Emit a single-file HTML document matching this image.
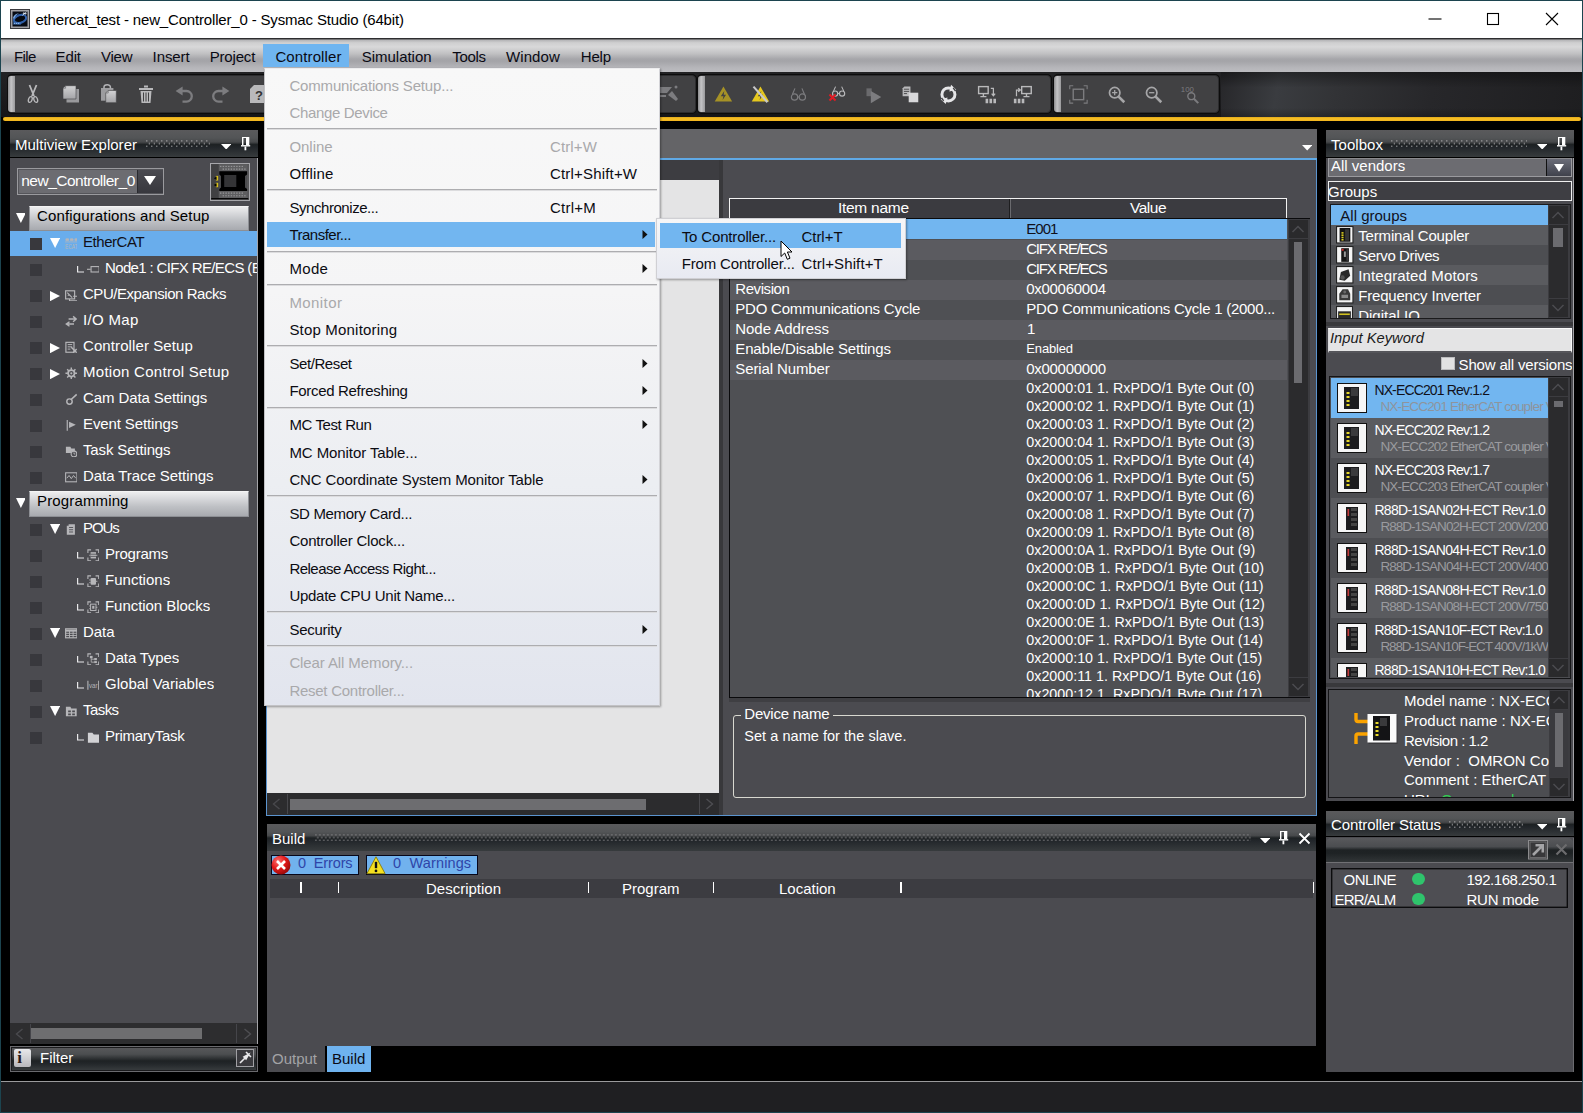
<!DOCTYPE html>
<html><head><meta charset="utf-8"><title>Sysmac Studio</title>
<style>
html,body{margin:0;padding:0;background:#000;}
body{width:1583px;height:1113px;overflow:hidden;font-family:"Liberation Sans",Arial,sans-serif;font-size:15px;color:#fff;}
#app{position:relative;width:1583px;height:1113px;overflow:hidden;background:#000;}
#app div,#app svg{position:absolute;box-sizing:border-box;}
.t{white-space:nowrap;line-height:20px;height:20px;}
.hdr{background:linear-gradient(#5a5a5c 0%,#535557 28%,#47494b 43%,#1d2123 52%,#22262a 62%,#373b3d 96%,#000 96.5%,#000 100%);}
.grip{background-image:radial-gradient(circle,#9c9c9e 0.55px,transparent 0.95px),radial-gradient(circle,#8e8e90 0.55px,transparent 0.95px);background-size:5px 5.8px,5px 5.8px;background-position:-1.7px -2.2px,0.8px 0.7px;}
.sel{background:#6fb3ef;}

.grip2{background-image:radial-gradient(circle,#78787a 0.55px,transparent 0.95px),radial-gradient(circle,#6c6c6e 0.55px,transparent 0.95px);background-size:4px 5.8px,4px 5.8px;background-position:-1.2px -2.2px,0.8px 0.7px;}
.hdr2{background:linear-gradient(#5a5a5c 0%,#535557 28%,#47494b 43%,#1d2123 52%,#22262a 62%,#373b3d 100%);}

</style></head>
<body>
<div id="app">
<div style="left:0px;top:0px;width:1583px;height:1113px;background:#000;border:1px solid #1c444f;"></div>
<div style="left:1px;top:1px;width:1581px;height:37px;background:#fff;"></div>
<svg style="left:10px;top:9px;" width="20" height="20" viewBox="0 0 20 20"><rect x="0.5" y="0.5" width="19" height="19" fill="#a2a2a6" stroke="#3a3a3e"/><rect x="2.5" y="2.5" width="15" height="15" fill="#070b14"/><ellipse cx="10" cy="10" rx="6.3" ry="3.8" transform="rotate(-18 10 10)" fill="none" stroke="#2f5ea6" stroke-width="2.2"/><ellipse cx="10.6" cy="9.6" rx="4.6" ry="2.4" transform="rotate(-18 10.6 9.6)" fill="#05080f"/><path d="M3 9 C3.5 6.5 6 4.5 9 4.2 C6.5 5.5 4.6 7.4 4.2 10 Z" fill="#7fb0e8"/><path d="M3.2 13.2 H11 V15.6 H3.2 Z" fill="#3d6fb5" opacity="0.8"/><path d="M4 14.4 H10" stroke="#9cc4f0" stroke-width="0.9" stroke-dasharray="1.2 0.8"/><path d="M12.5 6.5 L16.5 2.8 M13.6 3.2 L15.8 5.6 M12.8 4.6 L16.6 4.4" stroke="#e8f0fa" stroke-width="0.8"/></svg>
<div class="t" style="left:35.4px;top:9.5px;color:#000;letter-spacing:-0.166px;">ethercat_test - new_Controller_0 - Sysmac Studio (64bit)</div>
<svg style="left:1425px;top:8px;" width="140" height="22" viewBox="0 0 140 22"><path d="M3.5 11 H16.5" stroke="#000" stroke-width="1.1"/><rect x="62.5" y="5.5" width="11" height="11" fill="none" stroke="#000" stroke-width="1.1"/><path d="M121 5 L133 17 M133 5 L121 17" stroke="#000" stroke-width="1.1"/></svg>
<div style="left:1px;top:38px;width:1581px;height:34px;background:linear-gradient(#2e2e30 0%,#2e2e30 2.5%,#b4b4b6 6%,#cfcfd0 14%,#d8d8d9 26%,#c2c2c4 45%,#a6a6aa 62%,#a4a4a8 68%,#b6b6ba 88%,#bcbcc0 100%);"></div>
<div style="left:263px;top:44px;width:86px;height:23px;background:#6fb5f0;"></div>
<div class="t" style="left:14px;top:46.7px;color:#0a0a14;letter-spacing:-0.618px;">File</div>
<div class="t" style="left:55.6px;top:46.7px;color:#0a0a14;letter-spacing:-0.137px;">Edit</div>
<div class="t" style="left:101px;top:46.7px;color:#0a0a14;letter-spacing:-0.236px;">View</div>
<div class="t" style="left:152.6px;top:46.7px;color:#0a0a14;letter-spacing:-0.102px;">Insert</div>
<div class="t" style="left:209.7px;top:46.7px;color:#0a0a14;letter-spacing:-0.169px;">Project</div>
<div class="t" style="left:275.4px;top:46.7px;color:#0a0a14;letter-spacing:0.117px;">Controller</div>
<div class="t" style="left:361.8px;top:46.7px;color:#0a0a14;letter-spacing:-0.033px;">Simulation</div>
<div class="t" style="left:452.3px;top:46.7px;color:#0a0a14;letter-spacing:-0.323px;">Tools</div>
<div class="t" style="left:505.9px;top:46.7px;color:#0a0a14;letter-spacing:0.125px;">Window</div>
<div class="t" style="left:580.7px;top:46.7px;color:#0a0a14;letter-spacing:-0.138px;">Help</div>
<div style="left:1px;top:72px;width:1581px;height:45px;background:linear-gradient(#222224 0%,#1c1c1e 50%,#161618 100%);"></div>
<div style="left:1221px;top:72px;width:361px;height:45px;background:linear-gradient(rgba(0,0,0,0.35) 0%,rgba(0,0,0,0) 35%,rgba(0,0,0,0) 80%,rgba(0,0,0,0.25) 100%),linear-gradient(100deg,#27272a 0%,#3a3c40 16%,#323336 32%,#27272a 58%,#1e1e20 100%);"></div>
<div style="left:8px;top:74.6px;width:688px;height:38.4px;background:#414143;border:1px solid #2c2c2e;border-radius:4px;box-shadow:0 0 0 1px #0c0c0c;"></div>
<div style="left:8px;top:75.6px;width:7px;height:36.4px;background:linear-gradient(90deg,#8c8c8e,#c4c4c6 45%,#9a9a9c);border-radius:3px 0 0 3px;"></div>
<div style="left:698px;top:74.6px;width:353px;height:38.4px;background:#414143;border:1px solid #2c2c2e;border-radius:4px;box-shadow:0 0 0 1px #0c0c0c;"></div>
<div style="left:698px;top:75.6px;width:7px;height:36.4px;background:linear-gradient(90deg,#8c8c8e,#c4c4c6 45%,#9a9a9c);border-radius:3px 0 0 3px;"></div>
<div style="left:1054px;top:74.6px;width:165px;height:38.4px;background:#414143;border:1px solid #2c2c2e;border-radius:4px;box-shadow:0 0 0 1px #0c0c0c;"></div>
<div style="left:1054px;top:75.6px;width:7px;height:36.4px;background:linear-gradient(90deg,#8c8c8e,#c4c4c6 45%,#9a9a9c);border-radius:3px 0 0 3px;"></div>
<svg style="left:21.0px;top:82.0px;" width="24.0" height="24.0" viewBox="0 0 24 24"><path d="M8.5 3 L13 14 M15.5 3 L11 14" stroke="#b9b9bb" stroke-width="1.8" fill="none"/><ellipse cx="9.3" cy="17.5" rx="1.8" ry="3" fill="none" stroke="#b9b9bb" stroke-width="1.3" transform="rotate(18 9.3 17.5)"/><ellipse cx="14.7" cy="17.5" rx="1.8" ry="3" fill="none" stroke="#b9b9bb" stroke-width="1.3" transform="rotate(-18 14.7 17.5)"/></svg>
<svg style="left:58.0px;top:82.0px;" width="24.0" height="24.0" viewBox="0 0 24 24"><defs><linearGradient id="pg" x1="0" y1="0" x2="0" y2="1"><stop offset="0" stop-color="#d2d2d4"/><stop offset="1" stop-color="#a4a4a7"/></linearGradient></defs><path d="M8.5 7 H21 V20.5 H8.5 Z" fill="#9a9a9d"/><path d="M5 6.2 L7.6 3.7 H18 V17 H5 Z" fill="url(#pg)" stroke="#414143" stroke-width="0.6"/><path d="M5 6.2 H7.6 V3.7" fill="none" stroke="#6a6a6d" stroke-width="0.7"/></svg>
<svg style="left:96.0px;top:82.0px;" width="24.0" height="24.0" viewBox="0 0 24 24"><path d="M5 6 H17.4 V18.7 H5 Z" fill="#9c9c9f"/><path d="M8 6.5 V5 A3.2 2.2 0 0 1 14.4 5 V6.5" fill="none" stroke="#b4b4b7" stroke-width="1.5"/><path d="M9.7 11 L12.2 8.5 H20.3 V20.7 H9.7 Z" fill="url(#pg)" stroke="#414143" stroke-width="0.6"/><path d="M9.7 11 H12.2 V8.5" fill="none" stroke="#6a6a6d" stroke-width="0.7"/></svg>
<svg style="left:134.0px;top:82.0px;" width="24.0" height="24.0" viewBox="0 0 24 24"><path d="M5 7 H19 M10 4.5 H14" stroke="#b9b9bb" stroke-width="1.8"/><path d="M6.5 9 H17.5 L16.5 21 H7.5 Z" fill="#b9b9bb"/><path d="M9.5 10.5 V19.5 M12 10.5 V19.5 M14.5 10.5 V19.5" stroke="#414143" stroke-width="1"/></svg>
<svg style="left:172.0px;top:82.0px;" width="24.0" height="24.0" viewBox="0 0 24 24"><path d="M9 9 H14.5 A5.3 5.3 0 0 1 14.5 19.6 H10.5" fill="none" stroke="#7c7c7f" stroke-width="2.3"/><path d="M3.6 9 L10.6 4.4 V13.6 Z" fill="#7c7c7f"/></svg>
<svg style="left:209.0px;top:82.0px;" width="24.0" height="24.0" viewBox="0 0 24 24"><path d="M15 9 H9.5 A5.3 5.3 0 0 0 9.5 19.6 H13.5" fill="none" stroke="#7c7c7f" stroke-width="2.3"/><path d="M20.4 9 L13.4 4.4 V13.6 Z" fill="#7c7c7f"/></svg>
<svg style="left:246.0px;top:82.0px;" width="24.0" height="24.0" viewBox="0 0 24 24"><path d="M4 7 L8 3 H20 V21 H4 Z" fill="#b9b9bb"/><text x="9" y="18" font-size="13" font-weight="bold" font-family="Liberation Sans" fill="#333">?</text></svg>
<svg style="left:656.0px;top:82.0px;" width="24.0" height="24.0" viewBox="0 0 24 24"><path d="M3 5 H16 L11 11 H3 Z" fill="#7c7c7f"/><path d="M12 13 L16 9 L22 17 L20 19 Z" fill="#7c7c7f"/><path d="M3 14 H10" stroke="#7c7c7f" stroke-width="2"/><circle cx="20" cy="5" r="1.5" fill="#7c7c7f"/></svg>
<svg style="left:712.56px;top:83.56px;" width="20.88" height="20.88" viewBox="0 0 24 24"><path d="M12 3 L22 20 H2 Z" fill="#a69226"/><path d="M13 8 L9 14 H12 L11 18.5 L15 12.5 H12.3 Z" fill="#414143"/></svg>
<svg style="left:749.56px;top:83.56px;" width="20.88" height="20.88" viewBox="0 0 24 24"><path d="M12 3 L22 20 H2 Z" fill="#e6c81e"/><path d="M13 8 L9 14 H12 L11 18.5 L15 12.5 H12.3 Z" fill="#414143"/><path d="M4 3 L20 21" stroke="#c8c8ca" stroke-width="2.4"/></svg>
<svg style="left:787.56px;top:83.56px;" width="20.88" height="20.88" viewBox="0 0 24 24"><circle cx="7.5" cy="15" r="3.6" fill="none" stroke="#7c7c7f" stroke-width="1.4"/><circle cx="16.5" cy="15" r="3.6" fill="none" stroke="#7c7c7f" stroke-width="1.4"/><path d="M5 12 L8 5 M19 12 L16 5 M11 15 H13" stroke="#7c7c7f" stroke-width="1.3" fill="none"/></svg>
<svg style="left:825.56px;top:83.56px;" width="20.88" height="20.88" viewBox="0 0 24 24"><circle cx="10.5" cy="11" r="3" fill="none" stroke="#b9b9bb" stroke-width="1.3"/><circle cx="18.5" cy="11" r="3" fill="none" stroke="#b9b9bb" stroke-width="1.3"/><path d="M8.5 8.5 L11 3 M20.5 8.5 L18 3 M13.5 11 H15.5" stroke="#b9b9bb" stroke-width="1.2" fill="none"/><path d="M4 12 L11 19 M11 12 L4 19" stroke="#e01b24" stroke-width="2.4"/></svg>
<svg style="left:862.56px;top:83.56px;" width="20.88" height="20.88" viewBox="0 0 24 24"><path d="M4 5 H10 V14 H4 Z" fill="#6a6a6d"/><path d="M9 8 L21 15 L9 22 Z" fill="#7c7c7f"/></svg>
<svg style="left:899.56px;top:83.56px;" width="20.88" height="20.88" viewBox="0 0 24 24"><path d="M3 5 L5 3 H12 V14 H3 Z" fill="#b9b9bb"/><path d="M4.5 6 H10.5 M4.5 8.5 H10.5 M4.5 11 H8" stroke="#414143" stroke-width="1"/><rect x="10" y="10" width="11" height="11" fill="#d8d8da"/></svg>
<svg style="left:937.56px;top:83.56px;" width="20.88" height="20.88" viewBox="0 0 24 24"><circle cx="12" cy="12" r="7.5" fill="none" stroke="#e6e6e8" stroke-width="3.4"/><path d="M15 1 L21 6.5 L13 8.5 Z" fill="#e6e6e8"/><path d="M9 23 L3 17.5 L11 15.5 Z" fill="#e6e6e8"/><path d="M17.5 4.5 L20 8 M6.5 19.5 L4 16" stroke="#414143" stroke-width="1.6"/></svg>
<svg style="left:975.56px;top:83.56px;" width="20.88" height="20.88" viewBox="0 0 24 24"><rect x="3" y="3" width="11" height="8" fill="none" stroke="#b9b9bb" stroke-width="1.6"/><path d="M8.5 11 V14 M5 14.5 H12" stroke="#b9b9bb" stroke-width="1.6"/><path d="M17 5 H20 V13 M18 11 L20 13.5 L22 11" stroke="#b9b9bb" stroke-width="1.4" fill="none"/><path d="M11 17 H14 V22 H11 Z M15.5 17 H18.5 V22 H15.5 Z M20 17 H23 V22 H20 Z" fill="#b9b9bb"/></svg>
<svg style="left:1012.56px;top:83.56px;" width="20.88" height="20.88" viewBox="0 0 24 24"><rect x="10" y="3" width="11" height="8" fill="none" stroke="#b9b9bb" stroke-width="1.6"/><path d="M15.5 11 V14 M12 14.5 H19" stroke="#b9b9bb" stroke-width="1.6"/><path d="M4 14 V7 H8 M6 5 L8.5 7 L6 9" stroke="#b9b9bb" stroke-width="1.4" fill="none"/><path d="M1 17 H4 V22 H1 Z M5.5 17 H8.5 V22 H5.5 Z M10 17 H13 V22 H10 Z" fill="#b9b9bb"/></svg>
<svg style="left:1067.56px;top:83.56px;" width="20.88" height="20.88" viewBox="0 0 24 24"><rect x="6" y="6" width="12" height="12" fill="none" stroke="#7c7c7f" stroke-width="1.6"/><path d="M2 6 V2 H6 M18 2 H22 V6 M22 18 V22 H18 M6 22 H2 V18" stroke="#7c7c7f" stroke-width="1.3" fill="none"/></svg>
<svg style="left:1105.56px;top:83.56px;" width="20.88" height="20.88" viewBox="0 0 24 24"><circle cx="10" cy="10" r="6" fill="none" stroke="#a6a6a8" stroke-width="2"/><path d="M14.5 14.5 L21 21" stroke="#a6a6a8" stroke-width="3"/><path d="M7 10 H13 M10 7 V13" stroke="#a6a6a8" stroke-width="1.5"/></svg>
<svg style="left:1142.56px;top:83.56px;" width="20.88" height="20.88" viewBox="0 0 24 24"><circle cx="10" cy="10" r="6" fill="none" stroke="#a6a6a8" stroke-width="2"/><path d="M14.5 14.5 L21 21" stroke="#a6a6a8" stroke-width="3"/><path d="M7 10 H13" stroke="#a6a6a8" stroke-width="1.5"/></svg>
<svg style="left:1179.56px;top:83.56px;" width="20.88" height="20.88" viewBox="0 0 24 24"><text x="1" y="9" font-size="9" font-family="Liberation Sans" fill="#7c7c7f">100</text><circle cx="13" cy="14" r="4" fill="none" stroke="#7c7c7f" stroke-width="1.6"/><path d="M16 17 L21 22" stroke="#7c7c7f" stroke-width="2.4"/></svg>
<div style="left:3px;top:117px;width:1578px;height:4px;background:linear-gradient(#e0a81c,#f8c024 45%,#f2b41e);border-radius:3px 3px 3px 3px;"></div>
<div style="left:10px;top:130px;width:248px;height:942px;background:#4b4b50;"></div>
<div class="hdr" style="left:10px;top:130px;width:248px;height:27.7px;"></div>
<div class="t" style="left:15px;top:134.8px;letter-spacing:0.017px;">Multiview Explorer</div>
<div class="grip" style="left:146px;top:140px;width:64px;height:7px;"></div>
<svg style="left:221px;top:143.8px;" width="10.4" height="5.5" viewBox="0 0 10.4 5.5"><path d="M0 0 H10.4 L5.2 5.5 Z" fill="#fff"/></svg>
<svg style="left:241px;top:137px;" width="10" height="14" viewBox="0 0 10 14"><path d="M1 0 H8.3 V8.3 H5 V1 H2.4 V8.3 H1 Z" fill="#fff"/><rect x="0" y="8.1" width="9.2" height="1.4" fill="#fff"/><rect x="3.5" y="9.5" width="1.8" height="3.8" fill="#fff"/></svg>
<div style="left:17px;top:168px;width:147px;height:27px;background:#6c6c71;border:1px solid #9a9a9e;box-shadow:inset 0 0 0 1px #55555a;"></div>
<div style="left:137px;top:170px;width:26px;height:23px;background:linear-gradient(#4a4a50,#38383e);border-left:1px solid #2a2a2e;"></div>
<div class="t" style="left:21.2px;top:170.5px;font-size:15.5px;letter-spacing:-0.493px;">new_Controller_0</div>
<svg style="left:144px;top:176px;" width="12" height="10" viewBox="0 0 12 10"><path d="M0 0 H12 L6 9 Z" fill="#fff"/></svg>
<svg style="left:210px;top:163px;" width="40" height="38" viewBox="0 0 40 38"><rect x="0.5" y="0.5" width="39" height="37" fill="#4c4c4e" stroke="#a6a6aa"/><rect x="1.2" y="1.2" width="7.6" height="34" fill="#404042"/><rect x="8.8" y="1.2" width="28.3" height="7" fill="#5e5e60"/><rect x="8.8" y="28" width="28.3" height="7" fill="#5e5e60"/><rect x="37.1" y="1.2" width="1.7" height="34" fill="#5a5a5c"/><rect x="10.0" y="2.9" width="1.4" height="1" fill="#9a9a9c"/><rect x="12.6" y="5.3" width="1.4" height="1.7" fill="#8a8a8c"/><rect x="12.7" y="2.9" width="1.4" height="1" fill="#9a9a9c"/><rect x="15.3" y="5.3" width="1.4" height="1.7" fill="#8a8a8c"/><rect x="15.4" y="2.9" width="1.4" height="1" fill="#9a9a9c"/><rect x="18.0" y="5.3" width="1.4" height="1.7" fill="#8a8a8c"/><rect x="18.1" y="2.9" width="1.4" height="1" fill="#9a9a9c"/><rect x="20.7" y="5.3" width="1.4" height="1.7" fill="#8a8a8c"/><rect x="20.8" y="2.9" width="1.4" height="1" fill="#9a9a9c"/><rect x="23.4" y="5.3" width="1.4" height="1.7" fill="#8a8a8c"/><rect x="23.5" y="2.9" width="1.4" height="1" fill="#9a9a9c"/><rect x="26.1" y="5.3" width="1.4" height="1.7" fill="#8a8a8c"/><rect x="26.2" y="2.9" width="1.4" height="1" fill="#9a9a9c"/><rect x="28.8" y="5.3" width="1.4" height="1.7" fill="#8a8a8c"/><rect x="28.9" y="2.9" width="1.4" height="1" fill="#9a9a9c"/><rect x="31.5" y="5.3" width="1.4" height="1.7" fill="#8a8a8c"/><rect x="31.6" y="2.9" width="1.4" height="1" fill="#9a9a9c"/><rect x="34.2" y="5.3" width="1.4" height="1.7" fill="#8a8a8c"/><rect x="10.0" y="29.3" width="1.4" height="1.7" fill="#8a8a8c"/><rect x="12.6" y="32.3" width="1.4" height="1" fill="#9a9a9c"/><rect x="12.7" y="29.3" width="1.4" height="1.7" fill="#8a8a8c"/><rect x="15.3" y="32.3" width="1.4" height="1" fill="#9a9a9c"/><rect x="15.4" y="29.3" width="1.4" height="1.7" fill="#8a8a8c"/><rect x="18.0" y="32.3" width="1.4" height="1" fill="#9a9a9c"/><rect x="18.1" y="29.3" width="1.4" height="1.7" fill="#8a8a8c"/><rect x="20.7" y="32.3" width="1.4" height="1" fill="#9a9a9c"/><rect x="20.8" y="29.3" width="1.4" height="1.7" fill="#8a8a8c"/><rect x="23.4" y="32.3" width="1.4" height="1" fill="#9a9a9c"/><rect x="23.5" y="29.3" width="1.4" height="1.7" fill="#8a8a8c"/><rect x="26.1" y="32.3" width="1.4" height="1" fill="#9a9a9c"/><rect x="26.2" y="29.3" width="1.4" height="1.7" fill="#8a8a8c"/><rect x="28.8" y="32.3" width="1.4" height="1" fill="#9a9a9c"/><rect x="28.9" y="29.3" width="1.4" height="1.7" fill="#8a8a8c"/><rect x="31.5" y="32.3" width="1.4" height="1" fill="#9a9a9c"/><rect x="31.6" y="29.3" width="1.4" height="1.7" fill="#8a8a8c"/><rect x="34.2" y="32.3" width="1.4" height="1" fill="#9a9a9c"/><path d="M9.3 8.2 H37.1 V11.5 L35 13 V24.5 L37.1 26 V28 H9.3 V26 L11 24.5 V13 L9.3 11.5 Z" fill="#000"/><rect x="14.2" y="12" width="12.1" height="12" fill="#343436"/><rect x="1.2" y="35" width="37" height="1.2" fill="#060606"/><rect x="5.9" y="12.9" width="2.3" height="4.7" fill="#d6be1e"/><rect x="5.9" y="19.8" width="2.3" height="4.4" fill="#d6be1e"/><path d="M3.8 15.2 L6.6 13.4 V17 Z M3.8 22 L6.6 20.2 V23.8 Z" fill="#050505"/></svg>
<div style="left:29px;top:205.5px;width:220px;height:25.5px;background:linear-gradient(#ededee 0%,#d6d7da 30%,#bfc1c5 60%,#a8aaaf 100%);border:1px solid #8d8f94;border-top-color:#f4f4f4;"></div>
<div class="t" style="left:37.1px;top:205.8px;color:#000;letter-spacing:0.134px;">Configurations and Setup</div>
<svg style="left:15.6px;top:212.8px;" width="9.8" height="10" viewBox="0 0 9.8 10"><path d="M0 0 H9.8 L4.9 10 Z" fill="#fff"/></svg>
<div style="left:29px;top:491px;width:220px;height:25.5px;background:linear-gradient(#ededee 0%,#d6d7da 30%,#bfc1c5 60%,#a8aaaf 100%);border:1px solid #8d8f94;border-top-color:#f4f4f4;"></div>
<div class="t" style="left:37.1px;top:491.3px;color:#000;letter-spacing:0.134px;">Programming</div>
<svg style="left:15.6px;top:498.3px;" width="9.8" height="10" viewBox="0 0 9.8 10"><path d="M0 0 H9.8 L4.9 10 Z" fill="#fff"/></svg>
<div style="left:10px;top:231px;width:247px;height:25px;background:#69adec;"></div>
<div style="left:30px;top:238px;width:12px;height:12px;background:#38383d;"></div>
<svg style="left:50.3px;top:238.3px;" width="10.2" height="10" viewBox="0 0 10.2 10"><path d="M0 0 H10.2 L5.1 10 Z" fill="#fff"/></svg>
<svg style="left:64.6px;top:236.8px;" width="12.6" height="12.6" viewBox="0 0 14 14"><path d="M1 2 H4 V4 H1 Z M6 2 H9 V4 H6 Z M11 2 H14 V4 H11 Z M0 5.5 H14" fill="#b6b6b9" stroke="#b6b6b9" stroke-width="0.8"/><text x="0" y="13.5" font-size="7" font-family="Liberation Sans" fill="#b6b6b9" textLength="14" lengthAdjust="spacingAndGlyphs">ECAT</text></svg>
<div class="t" style="left:83px;top:232px;color:#101018;letter-spacing:-0.455px;">EtherCAT</div>
<div style="left:30px;top:264px;width:12px;height:12px;background:#38383d;"></div>
<svg style="left:77px;top:266.3px;" width="7" height="7" viewBox="0 0 7 7"><path d="M0.6 0 V6 H7" stroke="#e8e8ea" stroke-width="1.2" fill="none"/></svg>
<svg style="left:86.6px;top:262.8px;" width="12.6" height="12.6" viewBox="0 0 14 14"><path d="M0 7 H4" stroke="#b6b6b9" stroke-width="1.2"/><rect x="4.5" y="4" width="9" height="6" fill="none" stroke="#b6b6b9" stroke-width="1.2"/></svg>
<div class="t" style="left:105px;top:258px;letter-spacing:-0.639px;max-width:152px;overflow:hidden;">Node1 : CIFX RE/ECS (E</div>
<div style="left:30px;top:290px;width:12px;height:12px;background:#38383d;"></div>
<svg style="left:50px;top:290.6px;" width="10" height="10.2" viewBox="0 0 10 10.2"><path d="M0 0 V10.2 L10 5.1 Z" fill="#fff"/></svg>
<svg style="left:64.6px;top:288.8px;" width="12.6" height="12.6" viewBox="0 0 14 14"><rect x="0.7" y="2" width="10" height="9" fill="none" stroke="#b6b6b9" stroke-width="1.3"/><path d="M2.5 4 L8 9.5 M3 7 H6" stroke="#b6b6b9" stroke-width="1.2"/><path d="M9 8 H14 V13 H5 V11" fill="none" stroke="#b6b6b9" stroke-width="1.2"/></svg>
<div class="t" style="left:83px;top:284px;letter-spacing:-0.459px;">CPU/Expansion Racks</div>
<div style="left:30px;top:316px;width:12px;height:12px;background:#38383d;"></div>
<svg style="left:64.6px;top:314.8px;" width="12.6" height="12.6" viewBox="0 0 14 14"><path d="M4 4.5 H12 M9 1.5 L12.5 4.5 L9 7.5" stroke="#b6b6b9" stroke-width="1.6" fill="none"/><path d="M10 10 H2 M5 7.5 L1.5 10 L5 12.5" stroke="#b6b6b9" stroke-width="1.6" fill="none"/></svg>
<div class="t" style="left:83px;top:310px;letter-spacing:0.322px;">I/O Map</div>
<div style="left:30px;top:342px;width:12px;height:12px;background:#38383d;"></div>
<svg style="left:50px;top:342.6px;" width="10" height="10.2" viewBox="0 0 10 10.2"><path d="M0 0 V10.2 L10 5.1 Z" fill="#fff"/></svg>
<svg style="left:64.6px;top:340.8px;" width="12.6" height="12.6" viewBox="0 0 14 14"><rect x="1" y="1.5" width="9" height="11" fill="none" stroke="#b6b6b9" stroke-width="1.3"/><path d="M3 4 H8 M3 6.5 H8 M3 9 H6" stroke="#b6b6b9" stroke-width="1.1"/><path d="M7 7 L13 13 M9 13 L13 9" stroke="#b6b6b9" stroke-width="1.6"/></svg>
<div class="t" style="left:83px;top:336px;letter-spacing:0.094px;">Controller Setup</div>
<div style="left:30px;top:368px;width:12px;height:12px;background:#38383d;"></div>
<svg style="left:50px;top:368.6px;" width="10" height="10.2" viewBox="0 0 10 10.2"><path d="M0 0 V10.2 L10 5.1 Z" fill="#fff"/></svg>
<svg style="left:64.6px;top:366.8px;" width="12.6" height="12.6" viewBox="0 0 14 14"><circle cx="7" cy="7" r="3.6" fill="none" stroke="#b6b6b9" stroke-width="2"/><circle cx="7" cy="7" r="1.2" fill="#b6b6b9"/><path d="M7 0.5 V3 M7 11 V13.5 M0.5 7 H3 M11 7 H13.5 M2.4 2.4 L4.1 4.1 M9.9 9.9 L11.6 11.6 M2.4 11.6 L4.1 9.9 M9.9 4.1 L11.6 2.4" stroke="#b6b6b9" stroke-width="1.6"/></svg>
<div class="t" style="left:83px;top:362px;letter-spacing:0.275px;">Motion Control Setup</div>
<div style="left:30px;top:394px;width:12px;height:12px;background:#38383d;"></div>
<svg style="left:64.6px;top:392.8px;" width="12.6" height="12.6" viewBox="0 0 14 14"><circle cx="5" cy="9.5" r="3" fill="none" stroke="#b6b6b9" stroke-width="1.6"/><path d="M6.5 7.5 L13 1.5" stroke="#b6b6b9" stroke-width="1.8"/></svg>
<div class="t" style="left:83px;top:388px;letter-spacing:-0.099px;">Cam Data Settings</div>
<div style="left:30px;top:420px;width:12px;height:12px;background:#38383d;"></div>
<svg style="left:64.6px;top:418.8px;" width="12.6" height="12.6" viewBox="0 0 14 14"><path d="M2.5 1 V13" stroke="#b6b6b9" stroke-width="1.3"/><path d="M4.5 3 L12 6.5 L4.5 10 Z" fill="#b6b6b9"/></svg>
<div class="t" style="left:83px;top:414px;letter-spacing:-0.109px;">Event Settings</div>
<div style="left:30px;top:446px;width:12px;height:12px;background:#38383d;"></div>
<svg style="left:64.6px;top:444.8px;" width="12.6" height="12.6" viewBox="0 0 14 14"><path d="M1 2 H6 L7 4 H11 V9 H1 Z" fill="#b6b6b9"/><circle cx="10" cy="10" r="3.2" fill="#4b4b50" stroke="#b6b6b9" stroke-width="1.2"/><path d="M10 8.3 V10 H11.5" stroke="#b6b6b9" stroke-width="1" fill="none"/></svg>
<div class="t" style="left:83px;top:440px;letter-spacing:-0.139px;">Task Settings</div>
<div style="left:30px;top:472px;width:12px;height:12px;background:#38383d;"></div>
<svg style="left:64.6px;top:470.8px;" width="12.6" height="12.6" viewBox="0 0 14 14"><rect x="0.7" y="2" width="12.6" height="10" fill="none" stroke="#b6b6b9" stroke-width="1.2"/><path d="M2 8 L4.5 5 L7 8.5 L9.5 5 L12 8" stroke="#b6b6b9" stroke-width="1.1" fill="none"/></svg>
<div class="t" style="left:83px;top:466px;letter-spacing:-0.070px;">Data Trace Settings</div>
<div style="left:30px;top:524px;width:12px;height:12px;background:#38383d;"></div>
<svg style="left:50.3px;top:524.3px;" width="10.2" height="10" viewBox="0 0 10.2 10"><path d="M0 0 H10.2 L5.1 10 Z" fill="#fff"/></svg>
<svg style="left:64.6px;top:522.8px;" width="12.6" height="12.6" viewBox="0 0 14 14"><path d="M2 3 H4 V1.5 H11 V13 H2 Z" fill="#b6b6b9"/><path d="M4.5 5 H9 M4.5 7.5 H9 M4.5 10 H9" stroke="#4b4b50" stroke-width="1"/></svg>
<div class="t" style="left:83px;top:518px;letter-spacing:-1.126px;">POUs</div>
<div style="left:30px;top:550px;width:12px;height:12px;background:#38383d;"></div>
<svg style="left:77px;top:552.3px;" width="7" height="7" viewBox="0 0 7 7"><path d="M0.6 0 V6 H7" stroke="#e8e8ea" stroke-width="1.2" fill="none"/></svg>
<svg style="left:86.6px;top:548.8px;" width="12.6" height="12.6" viewBox="0 0 14 14"><path d="M1 4.5 V1 H4.5 M9.5 1 H13 V4.5 M13 9.5 V13 H9.5 M4.5 13 H1 V9.5" stroke="#b6b6b9" stroke-width="1.2" fill="none"/><rect x="4" y="3.5" width="6" height="7" fill="#b6b6b9"/><path d="M4 5.8 H10 M4 8.2 H10" stroke="#4b4b50" stroke-width="0.9"/><path d="M2.5 7 H4 M10 7 H11.5" stroke="#b6b6b9" stroke-width="1"/></svg>
<div class="t" style="left:105px;top:544px;letter-spacing:-0.240px;max-width:152px;overflow:hidden;">Programs</div>
<div style="left:30px;top:576px;width:12px;height:12px;background:#38383d;"></div>
<svg style="left:77px;top:578.3px;" width="7" height="7" viewBox="0 0 7 7"><path d="M0.6 0 V6 H7" stroke="#e8e8ea" stroke-width="1.2" fill="none"/></svg>
<svg style="left:86.6px;top:574.8px;" width="12.6" height="12.6" viewBox="0 0 14 14"><path d="M1 4.5 V1 H4.5 M9.5 1 H13 V4.5 M13 9.5 V13 H9.5 M4.5 13 H1 V9.5" stroke="#b6b6b9" stroke-width="1.2" fill="none"/><rect x="4" y="3.2" width="6" height="7.6" rx="1" fill="#b6b6b9"/><path d="M2.5 5.5 H4 M2.5 8.5 H4 M10 7 H11.5" stroke="#b6b6b9" stroke-width="1"/></svg>
<div class="t" style="left:105px;top:570px;letter-spacing:0.019px;max-width:152px;overflow:hidden;">Functions</div>
<div style="left:30px;top:602px;width:12px;height:12px;background:#38383d;"></div>
<svg style="left:77px;top:604.3px;" width="7" height="7" viewBox="0 0 7 7"><path d="M0.6 0 V6 H7" stroke="#e8e8ea" stroke-width="1.2" fill="none"/></svg>
<svg style="left:86.6px;top:600.8px;" width="12.6" height="12.6" viewBox="0 0 14 14"><path d="M1 4.5 V1 H4.5 M9.5 1 H13 V4.5 M13 9.5 V13 H9.5 M4.5 13 H1 V9.5" stroke="#b6b6b9" stroke-width="1.2" fill="none"/><rect x="4" y="3.5" width="6" height="7" fill="none" stroke="#b6b6b9" stroke-width="1.1"/><rect x="5.8" y="5.4" width="2.4" height="3.2" fill="#b6b6b9"/><path d="M2.5 5.5 H4 M2.5 8.5 H4 M10 7 H11.5" stroke="#b6b6b9" stroke-width="1"/></svg>
<div class="t" style="left:105px;top:596px;letter-spacing:-0.052px;max-width:152px;overflow:hidden;">Function Blocks</div>
<div style="left:30px;top:628px;width:12px;height:12px;background:#38383d;"></div>
<svg style="left:50.3px;top:628.3px;" width="10.2" height="10" viewBox="0 0 10.2 10"><path d="M0 0 H10.2 L5.1 10 Z" fill="#fff"/></svg>
<svg style="left:64.6px;top:626.8px;" width="12.6" height="12.6" viewBox="0 0 14 14"><rect x="0.7" y="2" width="12.6" height="10" fill="none" stroke="#b6b6b9" stroke-width="1.3"/><path d="M0.7 4 H13.3" stroke="#b6b6b9" stroke-width="2.4"/><path d="M1 7 H13 M1 9.5 H13 M5 4 V12 M9 4 V12" stroke="#b6b6b9" stroke-width="1"/></svg>
<div class="t" style="left:83px;top:622px;letter-spacing:-0.071px;">Data</div>
<div style="left:30px;top:654px;width:12px;height:12px;background:#38383d;"></div>
<svg style="left:77px;top:656.3px;" width="7" height="7" viewBox="0 0 7 7"><path d="M0.6 0 V6 H7" stroke="#e8e8ea" stroke-width="1.2" fill="none"/></svg>
<svg style="left:86.6px;top:652.8px;" width="12.6" height="12.6" viewBox="0 0 14 14"><path d="M1 4.5 V1 H4.5 M9.5 1 H13 V4.5 M13 9.5 V13 H9.5 M4.5 13 H1 V9.5" stroke="#b6b6b9" stroke-width="1.2" fill="none"/><rect x="3.2" y="3.2" width="3" height="2.6" fill="#b6b6b9"/><rect x="8" y="5.6" width="3" height="2.4" fill="#b6b6b9"/><rect x="8" y="9" width="3" height="2.2" fill="#b6b6b9"/><path d="M4.7 5.8 V10.2 H8 M4.7 6.9 H8" stroke="#b6b6b9" stroke-width="0.9" fill="none"/></svg>
<div class="t" style="left:105px;top:648px;letter-spacing:-0.150px;max-width:152px;overflow:hidden;">Data Types</div>
<div style="left:30px;top:680px;width:12px;height:12px;background:#38383d;"></div>
<svg style="left:77px;top:682.3px;" width="7" height="7" viewBox="0 0 7 7"><path d="M0.6 0 V6 H7" stroke="#e8e8ea" stroke-width="1.2" fill="none"/></svg>
<svg style="left:86.6px;top:678.8px;" width="12.6" height="12.6" viewBox="0 0 14 14"><path d="M1 2 V12 M13 2 V12" stroke="#b6b6b9" stroke-width="1.2"/><text x="2.2" y="10" font-size="7" font-family="Liberation Sans" fill="#b6b6b9" textLength="9.6" lengthAdjust="spacingAndGlyphs">var</text></svg>
<div class="t" style="left:105px;top:674px;letter-spacing:0.016px;max-width:152px;overflow:hidden;">Global Variables</div>
<div style="left:30px;top:706px;width:12px;height:12px;background:#38383d;"></div>
<svg style="left:50.3px;top:706.3px;" width="10.2" height="10" viewBox="0 0 10.2 10"><path d="M0 0 H10.2 L5.1 10 Z" fill="#fff"/></svg>
<svg style="left:64.6px;top:704.8px;" width="12.6" height="12.6" viewBox="0 0 14 14"><path d="M1 2 H6 L7 4 H13 V12.5 H1 Z" fill="#b6b6b9"/><path d="M3.5 6 H6.5 V8 H3.5 Z M8 6 H11 V8 H8 Z M3.5 9.5 H6.5 V11.5 H3.5 Z M8 9.5 H11 V11.5 H8 Z" fill="#4b4b50"/></svg>
<div class="t" style="left:83px;top:700px;letter-spacing:-0.568px;">Tasks</div>
<div style="left:30px;top:732px;width:12px;height:12px;background:#38383d;"></div>
<svg style="left:77px;top:734.3px;" width="7" height="7" viewBox="0 0 7 7"><path d="M0.6 0 V6 H7" stroke="#e8e8ea" stroke-width="1.2" fill="none"/></svg>
<svg style="left:86.6px;top:730.8px;" width="12.6" height="12.6" viewBox="0 0 14 14"><path d="M1 2 H6 L7.5 4 H13.5 V13 H1 Z" fill="#d2d2d5"/></svg>
<div class="t" style="left:105px;top:726px;letter-spacing:-0.273px;max-width:152px;overflow:hidden;">PrimaryTask</div>
<div style="left:257px;top:158px;width:1px;height:865px;background:#a4a4a8;"></div>
<div style="left:10px;top:1022.7px;width:248px;height:21.3px;background:#2d2d2f;"></div>
<div style="left:30px;top:1024px;width:1px;height:19px;background:#45454a;"></div>
<div style="left:236px;top:1024px;width:1px;height:19px;background:#45454a;"></div>
<svg style="left:15px;top:1027.5px;" width="9" height="12" viewBox="0 0 9 12"><path d="M7.5 1 L1.5 6 L7.5 11" stroke="#4a4a4e" stroke-width="1.4" fill="none"/></svg>
<svg style="left:243px;top:1027.5px;" width="9" height="12" viewBox="0 0 9 12"><path d="M1.5 1 L7.5 6 L1.5 11" stroke="#4e4e52" stroke-width="1.4" fill="none"/></svg>
<div style="left:31px;top:1027.7px;width:170.6px;height:11.5px;background:#6e6e70;"></div>
<div style="left:257px;top:1022px;width:1px;height:24px;background:#a4a4a8;"></div>
<div style="left:10px;top:1044px;width:248px;height:2px;background:#000;"></div>
<div style="left:10px;top:1046px;width:248px;height:26px;background:linear-gradient(#58585b 0%,#4c4e50 30%,#1e2224 58%,#23272a 70%,#3a3e40 100%);border:1px solid #6a6a6e;box-shadow:inset 0 0 0 1px #1a1a1c;"></div>
<div style="left:14px;top:1049px;width:17px;height:18px;background:linear-gradient(#e8e8ea,#b8b8bc);border-radius:2px;"></div>
<div class="t" style="left:17.3px;top:1048px;font-size:17px;color:#2a1a1a;font-weight:bold;font-family:Liberation Serif,DejaVu Serif,serif;">i</div>
<div class="t" style="left:40px;top:1048px;">Filter</div>
<svg style="left:236px;top:1049px;" width="18" height="18" viewBox="0 0 18 18"><rect x="0.5" y="0.5" width="17" height="17" fill="#3a3a3e" stroke="#a0a0a4"/><path d="M10 3 L15 8 M12.5 5.5 L8 8 L10 10 Z M9 9 L4 14" stroke="#e8e8ea" stroke-width="1.6" fill="#e8e8ea"/></svg>
<div style="left:266px;top:129px;width:1051px;height:29px;background:#646467;"></div>
<svg style="left:1302px;top:145px;" width="10.4" height="5.5" viewBox="0 0 10.4 5.5"><path d="M0 0 H10.4 L5.2 5.5 Z" fill="#fff"/></svg>
<div style="left:266px;top:158px;width:1051px;height:2px;background:#5fa9e6;"></div>
<div style="left:266px;top:160px;width:1051px;height:656px;background:#3d3d41;border-left:1px solid #5b94cf;border-right:1px solid #5b94cf;border-bottom:1px solid #5b94cf;"></div>
<div style="left:267px;top:180px;width:452px;height:613px;background:#e4e4e5;"></div>
<div style="left:267px;top:793px;width:452px;height:22px;background:#2c2c2e;"></div>
<div style="left:287px;top:794px;width:1px;height:20px;background:#47474b;"></div>
<div style="left:699px;top:794px;width:1px;height:20px;background:#47474b;"></div>
<svg style="left:272px;top:798px;" width="9" height="12" viewBox="0 0 9 12"><path d="M7.5 1 L1.5 6 L7.5 11" stroke="#48484c" stroke-width="1.4" fill="none"/></svg>
<svg style="left:705px;top:798px;" width="9" height="12" viewBox="0 0 9 12"><path d="M1.5 1 L7.5 6 L1.5 11" stroke="#4e4e52" stroke-width="1.4" fill="none"/></svg>
<div style="left:290px;top:799px;width:356px;height:11px;background:#6d6d70;"></div>
<div style="left:719px;top:160px;width:4px;height:655px;background:#38383b;"></div>
<div style="left:723px;top:160px;width:593px;height:655px;background:#4b4b50;"></div>
<div style="left:729px;top:198px;width:558px;height:21px;background:#3b3b40;border:1px solid #f2f2f2;border-bottom:none;"></div>
<div style="left:1009px;top:199px;width:1px;height:20px;background:#1e1e20;"></div>
<div style="left:1010px;top:199px;width:1px;height:20px;background:#6a6a6e;"></div>
<div class="t" style="left:837.9px;top:198px;font-size:15.5px;letter-spacing:-0.258px;">Item name</div>
<div class="t" style="left:1130px;top:198px;font-size:15.5px;letter-spacing:-0.499px;">Value</div>
<div style="left:729px;top:218px;width:310px;height:480px;"></div>
<div style="left:729px;top:218px;width:581px;height:480px;background:#4f5054;border:1px solid #0a0a0c;"></div>
<div style="left:730px;top:219.4px;width:557px;height:19.6px;background:#72b6f0;"></div>
<div class="t" style="left:1026.3px;top:219px;color:#10101a;letter-spacing:-1.008px;">E001</div>
<div style="left:730px;top:240px;width:557px;height:20px;background:#5b5b60;"></div>
<div class="t" style="left:1026.3px;top:239px;letter-spacing:-1.262px;">CIFX RE/ECS</div>
<div style="left:730px;top:260px;width:557px;height:20px;background:#4f5054;"></div>
<div class="t" style="left:1026.3px;top:259px;letter-spacing:-1.262px;">CIFX RE/ECS</div>
<div style="left:730px;top:280px;width:557px;height:20px;background:#5b5b60;"></div>
<div class="t" style="left:735.3px;top:279px;letter-spacing:-0.428px;">Revision</div>
<div class="t" style="left:1026.3px;top:279px;letter-spacing:-0.308px;">0x00060004</div>
<div style="left:730px;top:300px;width:557px;height:20px;background:#4f5054;"></div>
<div class="t" style="left:735.3px;top:299px;letter-spacing:-0.215px;">PDO Communications Cycle</div>
<div class="t" style="left:1026.3px;top:299px;letter-spacing:-0.254px;">PDO Communications Cycle 1 (2000...</div>
<div style="left:730px;top:320px;width:557px;height:20px;background:#5b5b60;"></div>
<div class="t" style="left:735.3px;top:319px;letter-spacing:-0.052px;">Node Address</div>
<div class="t" style="left:1027px;top:319px;">1</div>
<div style="left:730px;top:340px;width:557px;height:20px;background:#4f5054;"></div>
<div class="t" style="left:735.3px;top:339px;letter-spacing:-0.164px;">Enable/Disable Settings</div>
<div class="t" style="left:1026.3px;top:339px;font-size:13px;letter-spacing:-0.158px;">Enabled</div>
<div style="left:730px;top:360px;width:557px;height:20px;background:#5b5b60;"></div>
<div class="t" style="left:735.3px;top:359px;letter-spacing:-0.113px;">Serial Number</div>
<div class="t" style="left:1026.3px;top:359px;letter-spacing:-0.308px;">0x00000000</div>
<div class="t" style="left:1026.3px;top:378px;font-size:14.3px;">0x2000:01 1. RxPDO/1 Byte Out (0)</div>
<div class="t" style="left:1026.3px;top:396px;font-size:14.3px;">0x2000:02 1. RxPDO/1 Byte Out (1)</div>
<div class="t" style="left:1026.3px;top:414px;font-size:14.3px;">0x2000:03 1. RxPDO/1 Byte Out (2)</div>
<div class="t" style="left:1026.3px;top:432px;font-size:14.3px;">0x2000:04 1. RxPDO/1 Byte Out (3)</div>
<div class="t" style="left:1026.3px;top:450px;font-size:14.3px;">0x2000:05 1. RxPDO/1 Byte Out (4)</div>
<div class="t" style="left:1026.3px;top:468px;font-size:14.3px;">0x2000:06 1. RxPDO/1 Byte Out (5)</div>
<div class="t" style="left:1026.3px;top:486px;font-size:14.3px;">0x2000:07 1. RxPDO/1 Byte Out (6)</div>
<div class="t" style="left:1026.3px;top:504px;font-size:14.3px;">0x2000:08 1. RxPDO/1 Byte Out (7)</div>
<div class="t" style="left:1026.3px;top:522px;font-size:14.3px;">0x2000:09 1. RxPDO/1 Byte Out (8)</div>
<div class="t" style="left:1026.3px;top:540px;font-size:14.3px;">0x2000:0A 1. RxPDO/1 Byte Out (9)</div>
<div class="t" style="left:1026.3px;top:558px;font-size:14.3px;">0x2000:0B 1. RxPDO/1 Byte Out (10)</div>
<div class="t" style="left:1026.3px;top:576px;font-size:14.3px;">0x2000:0C 1. RxPDO/1 Byte Out (11)</div>
<div class="t" style="left:1026.3px;top:594px;font-size:14.3px;">0x2000:0D 1. RxPDO/1 Byte Out (12)</div>
<div class="t" style="left:1026.3px;top:612px;font-size:14.3px;">0x2000:0E 1. RxPDO/1 Byte Out (13)</div>
<div class="t" style="left:1026.3px;top:630px;font-size:14.3px;">0x2000:0F 1. RxPDO/1 Byte Out (14)</div>
<div class="t" style="left:1026.3px;top:648px;font-size:14.3px;">0x2000:10 1. RxPDO/1 Byte Out (15)</div>
<div class="t" style="left:1026.3px;top:666px;font-size:14.3px;">0x2000:11 1. RxPDO/1 Byte Out (16)</div>
<div style="left:1020px;top:684px;width:266px;height:13px;overflow:hidden;"><div class="t" style="left:6.3px;top:0;font-size:14.3px">0x2000:12 1. RxPDO/1 Byte Out (17)</div></div>
<div style="left:1288px;top:219.4px;width:21.5px;height:477.6px;background:#3c3c40;"></div>
<div style="left:1289px;top:220.4px;width:18.5px;height:475.6px;background:#2b2b2d;"></div>
<div style="left:1289px;top:220.4px;width:18.5px;height:18px;background:#2a2a2c;"></div>
<div style="left:1289px;top:678.0px;width:18.5px;height:18px;background:#2a2a2c;"></div>
<div style="left:1289px;top:238.4px;width:18.5px;height:1px;background:#3c3c40;"></div>
<div style="left:1289px;top:677.0px;width:18.5px;height:1px;background:#3c3c40;"></div>
<svg style="left:1290.75px;top:224.4px;" width="14" height="10" viewBox="0 0 14 10"><path d="M1.5 8 L7 2.5 L12.5 8" stroke="#4c4c50" stroke-width="1.5" fill="none"/></svg>
<svg style="left:1290.75px;top:682.0px;" width="14" height="10" viewBox="0 0 14 10"><path d="M1.5 2 L7 7.5 L12.5 2" stroke="#4c4c50" stroke-width="1.5" fill="none"/></svg>
<div style="left:1293.5px;top:242px;width:8.5px;height:141px;background:#6b6b6f;"></div>
<div style="left:729px;top:698px;width:581px;height:4px;background:#3f3f43;"></div>
<div style="left:733px;top:715px;width:573px;height:83px;border:1px solid #d8d8d0;border-radius:3px;"></div>
<div style="left:741px;top:704px;width:92px;height:20px;background:#4b4b50;"></div>
<div class="t" style="left:744.3px;top:704px;letter-spacing:-0.231px;">Device name</div>
<div class="t" style="left:744.3px;top:725.5px;font-size:14.5px;letter-spacing:0.040px;">Set a name for the slave.</div>
<div style="left:1326px;top:130px;width:248px;height:671px;background:#4b4b50;"></div>
<div class="hdr" style="left:1326px;top:130px;width:248px;height:27.7px;"></div>
<div class="t" style="left:1331px;top:134.8px;letter-spacing:0.043px;">Toolbox</div>
<div class="grip" style="left:1391px;top:140px;width:136px;height:7px;"></div>
<svg style="left:1537px;top:143.8px;" width="10.4" height="5.5" viewBox="0 0 10.4 5.5"><path d="M0 0 H10.4 L5.2 5.5 Z" fill="#fff"/></svg>
<svg style="left:1557px;top:137px;" width="10" height="14" viewBox="0 0 10 14"><path d="M1 0 H8.3 V8.3 H5 V1 H2.4 V8.3 H1 Z" fill="#fff"/><rect x="0" y="8.1" width="9.2" height="1.4" fill="#fff"/><rect x="3.5" y="9.5" width="1.8" height="3.8" fill="#fff"/></svg>
<div style="left:1573px;top:158px;width:1px;height:643px;background:#a4a4a8;"></div>
<div style="left:1328px;top:158px;width:244px;height:19px;background:#6c6c71;border:1px solid #9a9a9e;border-top-color:#8a8a8e;"></div>
<div style="left:1546px;top:159px;width:25px;height:17px;background:linear-gradient(#6a6c78,#40424c);border-left:1px solid #111;"></div>
<div class="t" style="left:1331px;top:155.8px;">All vendors</div>
<svg style="left:1554px;top:163.9px;" width="10" height="8" viewBox="0 0 10 8"><path d="M0 0 H10 L5 7.8 Z" fill="#fff"/></svg>
<div style="left:1328px;top:181px;width:244px;height:20px;background:#3e3e43;border:1px solid #f0f0f0;"></div>
<div class="t" style="left:1328px;top:182px;">Groups</div>
<div style="left:1329.5px;top:203.5px;width:241.5px;height:115px;background:#4c4d51;border:1px solid #1a1a1c;"></div>
<div style="left:1331px;top:205px;width:216.5px;height:20px;background:#72b6f0;"></div>
<div class="t" style="left:1340.3px;top:205.5px;color:#10101a;">All groups</div>
<div style="left:1331px;top:225px;width:216.5px;height:20px;background:#5a5b5f;"></div>
<svg style="left:1336.3px;top:226.2px;" width="17.5" height="17.5" viewBox="0 0 16 16"><rect x="0.5" y="0.5" width="15" height="15" fill="#f4f4f4" stroke="#222"/><rect x="3.3" y="1.8" width="9.8" height="12.6" fill="#141414"/><rect x="5" y="5.6" width="1.9" height="1.4" fill="#e0d020"/><rect x="5" y="7.7" width="1.9" height="1.4" fill="#e0d020"/><rect x="5" y="9.8" width="1.9" height="1.4" fill="#e0d020"/><rect x="5" y="11.9" width="1.9" height="1.4" fill="#e0d020"/><rect x="8.3" y="3" width="3.6" height="10.5" fill="#343436"/></svg>
<div class="t" style="left:1358.2px;top:225.5px;letter-spacing:-0.149px;">Terminal Coupler</div>
<div style="left:1331px;top:245px;width:216.5px;height:20px;background:#4d4e52;"></div>
<svg style="left:1336.3px;top:246.2px;" width="17.5" height="17.5" viewBox="0 0 16 16"><rect x="0.5" y="0.5" width="15" height="15" fill="#f4f4f4" stroke="#222"/><rect x="4.8" y="2" width="7" height="12.5" fill="#161616"/><rect x="5.2" y="2.6" width="1.8" height="1.8" fill="#d02828"/><rect x="7.2" y="5" width="1.8" height="5" fill="#9a9a9a"/><rect x="9.6" y="3" width="1.6" height="10.5" fill="#3a3a3c"/></svg>
<div class="t" style="left:1358.2px;top:245.5px;letter-spacing:-0.405px;">Servo Drives</div>
<div style="left:1331px;top:265px;width:216.5px;height:20px;background:#5a5b5f;"></div>
<svg style="left:1336.3px;top:266.2px;" width="17.5" height="17.5" viewBox="0 0 16 16"><rect x="0.5" y="0.5" width="15" height="15" fill="#f4f4f4" stroke="#222"/><path d="M3 12.5 L4.5 5.5 L11.5 3 L13 9 L8 13.5 Z" fill="#2a2a2a"/><circle cx="6" cy="10.5" r="2" fill="#555"/></svg>
<div class="t" style="left:1358.2px;top:265.5px;letter-spacing:0.132px;">Integrated Motors</div>
<div style="left:1331px;top:285px;width:216.5px;height:20px;background:#4d4e52;"></div>
<svg style="left:1336.3px;top:286.2px;" width="17.5" height="17.5" viewBox="0 0 16 16"><rect x="0.5" y="0.5" width="15" height="15" fill="#f4f4f4" stroke="#222"/><path d="M3 13 V7 L6 3 H11 L13 7 V13 Z" fill="#3a3a3a"/><rect x="5" y="8" width="6" height="3" fill="#8a8a8a"/><circle cx="8" cy="5.5" r="1.3" fill="#6a6a6a"/></svg>
<div class="t" style="left:1358.2px;top:285.5px;letter-spacing:-0.183px;">Frequency Inverter</div>
<div style="left:1331px;top:305px;width:216.5px;height:12.5px;background:#5a5b5f;overflow:hidden;"><div class="t" style="left:27.2px;top:1px">Digital IO</div><svg style="left:5.3px;top:1.2px" width="17" height="17" viewBox="0 0 16 16"><rect x="0.5" y="0.5" width="15" height="15" fill="#f4f4f4" stroke="#222"/><rect x="2" y="5" width="12" height="8" fill="#2a2a2a"/><rect x="3" y="7" width="10" height="1.5" fill="#d0c020"/></svg></div>
<div style="left:1547.5px;top:204.5px;width:22.5px;height:113px;background:#3c3c40;"></div>
<div style="left:1548.5px;top:205.5px;width:19.5px;height:111px;background:#2b2b2d;"></div>
<div style="left:1548.5px;top:205.5px;width:19.5px;height:18px;background:#2a2a2c;"></div>
<div style="left:1548.5px;top:298.5px;width:19.5px;height:18px;background:#2a2a2c;"></div>
<div style="left:1548.5px;top:223.5px;width:19.5px;height:1px;background:#3c3c40;"></div>
<div style="left:1548.5px;top:297.5px;width:19.5px;height:1px;background:#3c3c40;"></div>
<svg style="left:1550.75px;top:209.5px;" width="14" height="10" viewBox="0 0 14 10"><path d="M1.5 8 L7 2.5 L12.5 8" stroke="#4c4c50" stroke-width="1.5" fill="none"/></svg>
<svg style="left:1550.75px;top:302.5px;" width="14" height="10" viewBox="0 0 14 10"><path d="M1.5 2 L7 7.5 L12.5 2" stroke="#4c4c50" stroke-width="1.5" fill="none"/></svg>
<div style="left:1553.0px;top:227.5px;width:9.5px;height:19px;background:#6b6b6f;"></div>
<div style="left:1326px;top:322px;width:247px;height:4px;background:#39393c;"></div>
<div style="left:1328px;top:328px;width:244px;height:25px;background:#e4e4e5;border:1px solid #fafafa;border-bottom:2px solid #55555a;border-left-color:#dcdcde;"></div>
<div class="t" style="left:1330px;top:328.3px;font-size:14.7px;color:#1a1a1a;font-style:italic;">Input Keyword</div>
<div style="left:1441px;top:356.8px;width:13.6px;height:13.4px;background:#e2e2e3;border:1px solid #bcbcbe;"></div>
<div class="t" style="left:1458.6px;top:354.7px;letter-spacing:-0.172px;max-width:114.4px;overflow:hidden;">Show all versions</div>
<div style="left:1329px;top:376.3px;width:242px;height:302.5px;background:#4c4d51;border:1px solid #141416;"></div>
<div style="left:1331.2px;top:377.7px;width:217.2px;height:40px;background:#72b6f0;overflow:hidden;"><svg style="left:6px;top:5px" width="30" height="30" viewBox="0 0 30 30"><rect x="0.5" y="0.5" width="29" height="29" fill="#f6f6f6" stroke="#111" stroke-width="1"/><rect x="7" y="4" width="15" height="22" fill="#1c1c1e"/><rect x="14" y="5" width="7" height="8" fill="#3a3a3c"/><rect x="9.5" y="9" width="3" height="2" fill="#e8d828"/><rect x="9.5" y="13" width="3" height="2" fill="#e8d828"/><rect x="9.5" y="17" width="3" height="2" fill="#e8d828"/><rect x="9.5" y="21" width="3" height="2" fill="#e8d828"/></svg><div class="t" style="left:43.2px;top:2.3px;font-size:14px;color:#10101a;letter-spacing:-0.851px">NX-ECC201 Rev:1.2</div><div class="t" style="left:49.2px;top:19.3px;font-size:13.5px;color:#8e949c;letter-spacing:-0.833px">NX-ECC201 EtherCAT coupler V</div></div>
<div style="left:1331.2px;top:417.7px;width:217.2px;height:40px;background:#5a5b5f;overflow:hidden;"><svg style="left:6px;top:5px" width="30" height="30" viewBox="0 0 30 30"><rect x="0.5" y="0.5" width="29" height="29" fill="#f6f6f6" stroke="#111" stroke-width="1"/><rect x="7" y="4" width="15" height="22" fill="#1c1c1e"/><rect x="14" y="5" width="7" height="8" fill="#3a3a3c"/><rect x="9.5" y="9" width="3" height="2" fill="#e8d828"/><rect x="9.5" y="13" width="3" height="2" fill="#e8d828"/><rect x="9.5" y="17" width="3" height="2" fill="#e8d828"/><rect x="9.5" y="21" width="3" height="2" fill="#e8d828"/></svg><div class="t" style="left:43.2px;top:2.3px;font-size:14px;color:#fff;letter-spacing:-0.851px">NX-ECC202 Rev:1.2</div><div class="t" style="left:49.2px;top:19.3px;font-size:13.5px;color:#9b9b9f;letter-spacing:-0.833px">NX-ECC202 EtherCAT coupler V</div></div>
<div style="left:1331.2px;top:457.7px;width:217.2px;height:40px;background:#4d4e52;overflow:hidden;"><svg style="left:6px;top:5px" width="30" height="30" viewBox="0 0 30 30"><rect x="0.5" y="0.5" width="29" height="29" fill="#f6f6f6" stroke="#111" stroke-width="1"/><rect x="7" y="4" width="15" height="22" fill="#1c1c1e"/><rect x="14" y="5" width="7" height="8" fill="#3a3a3c"/><rect x="9.5" y="9" width="3" height="2" fill="#e8d828"/><rect x="9.5" y="13" width="3" height="2" fill="#e8d828"/><rect x="9.5" y="17" width="3" height="2" fill="#e8d828"/><rect x="9.5" y="21" width="3" height="2" fill="#e8d828"/></svg><div class="t" style="left:43.2px;top:2.3px;font-size:14px;color:#fff;letter-spacing:-0.851px">NX-ECC203 Rev:1.7</div><div class="t" style="left:49.2px;top:19.3px;font-size:13.5px;color:#9b9b9f;letter-spacing:-0.833px">NX-ECC203 EtherCAT coupler V</div></div>
<div style="left:1331.2px;top:497.7px;width:217.2px;height:40px;background:#5a5b5f;overflow:hidden;"><svg style="left:6px;top:5px" width="30" height="30" viewBox="0 0 30 30"><rect x="0.5" y="0.5" width="29" height="29" fill="#f6f6f6" stroke="#111" stroke-width="1"/><rect x="9" y="4" width="12" height="23" fill="#1c1c1e"/><rect x="10.5" y="6" width="1.6" height="7" fill="#c23a3a"/><rect x="14" y="5" width="6" height="3" fill="#444"/><rect x="14" y="10" width="6" height="3" fill="#444"/><rect x="14" y="15" width="6" height="3" fill="#444"/><rect x="14" y="20" width="6" height="3" fill="#444"/></svg><div class="t" style="left:43.2px;top:2.3px;font-size:14px;color:#fff;letter-spacing:-0.690px">R88D-1SAN02H-ECT Rev:1.0</div><div class="t" style="left:49.2px;top:19.3px;font-size:13.5px;color:#9b9b9f;letter-spacing:-0.974px">R88D-1SAN02H-ECT 200V/200</div></div>
<div style="left:1331.2px;top:537.7px;width:217.2px;height:40px;background:#4d4e52;overflow:hidden;"><svg style="left:6px;top:5px" width="30" height="30" viewBox="0 0 30 30"><rect x="0.5" y="0.5" width="29" height="29" fill="#f6f6f6" stroke="#111" stroke-width="1"/><rect x="9" y="4" width="12" height="23" fill="#1c1c1e"/><rect x="10.5" y="6" width="1.6" height="7" fill="#c23a3a"/><rect x="14" y="5" width="6" height="3" fill="#444"/><rect x="14" y="10" width="6" height="3" fill="#444"/><rect x="14" y="15" width="6" height="3" fill="#444"/><rect x="14" y="20" width="6" height="3" fill="#444"/></svg><div class="t" style="left:43.2px;top:2.3px;font-size:14px;color:#fff;letter-spacing:-0.690px">R88D-1SAN04H-ECT Rev:1.0</div><div class="t" style="left:49.2px;top:19.3px;font-size:13.5px;color:#9b9b9f;letter-spacing:-0.974px">R88D-1SAN04H-ECT 200V/400</div></div>
<div style="left:1331.2px;top:577.7px;width:217.2px;height:40px;background:#5a5b5f;overflow:hidden;"><svg style="left:6px;top:5px" width="30" height="30" viewBox="0 0 30 30"><rect x="0.5" y="0.5" width="29" height="29" fill="#f6f6f6" stroke="#111" stroke-width="1"/><rect x="9" y="4" width="12" height="23" fill="#1c1c1e"/><rect x="10.5" y="6" width="1.6" height="7" fill="#c23a3a"/><rect x="14" y="5" width="6" height="3" fill="#444"/><rect x="14" y="10" width="6" height="3" fill="#444"/><rect x="14" y="15" width="6" height="3" fill="#444"/><rect x="14" y="20" width="6" height="3" fill="#444"/></svg><div class="t" style="left:43.2px;top:2.3px;font-size:14px;color:#fff;letter-spacing:-0.690px">R88D-1SAN08H-ECT Rev:1.0</div><div class="t" style="left:49.2px;top:19.3px;font-size:13.5px;color:#9b9b9f;letter-spacing:-0.974px">R88D-1SAN08H-ECT 200V/750</div></div>
<div style="left:1331.2px;top:617.7px;width:217.2px;height:40px;background:#4d4e52;overflow:hidden;"><svg style="left:6px;top:5px" width="30" height="30" viewBox="0 0 30 30"><rect x="0.5" y="0.5" width="29" height="29" fill="#f6f6f6" stroke="#111" stroke-width="1"/><rect x="9" y="4" width="12" height="23" fill="#1c1c1e"/><rect x="10.5" y="6" width="1.6" height="7" fill="#c23a3a"/><rect x="14" y="5" width="6" height="3" fill="#444"/><rect x="14" y="10" width="6" height="3" fill="#444"/><rect x="14" y="15" width="6" height="3" fill="#444"/><rect x="14" y="20" width="6" height="3" fill="#444"/></svg><div class="t" style="left:43.2px;top:2.3px;font-size:14px;color:#fff;letter-spacing:-0.754px">R88D-1SAN10F-ECT Rev:1.0</div><div class="t" style="left:49.2px;top:19.3px;font-size:13.5px;color:#9b9b9f;letter-spacing:-1.093px">R88D-1SAN10F-ECT 400V/1kW</div></div>
<div style="left:1331.2px;top:657.7px;width:217.2px;height:19.299999999999955px;background:#5a5b5f;overflow:hidden;"><svg style="left:6px;top:5px" width="30" height="30" viewBox="0 0 30 30"><rect x="0.5" y="0.5" width="29" height="29" fill="#f6f6f6" stroke="#111" stroke-width="1"/><rect x="9" y="4" width="12" height="23" fill="#1c1c1e"/><rect x="10.5" y="6" width="1.6" height="7" fill="#c23a3a"/><rect x="14" y="5" width="6" height="3" fill="#444"/><rect x="14" y="10" width="6" height="3" fill="#444"/><rect x="14" y="15" width="6" height="3" fill="#444"/><rect x="14" y="20" width="6" height="3" fill="#444"/></svg><div class="t" style="left:43.2px;top:2.3px;font-size:14px;color:#fff;letter-spacing:-0.690px">R88D-1SAN10H-ECT Rev:1.0</div></div>
<div style="left:1548.3px;top:377.3px;width:22px;height:300.2px;background:#3c3c40;"></div>
<div style="left:1549.3px;top:378.3px;width:19px;height:298.2px;background:#2b2b2d;"></div>
<div style="left:1549.3px;top:378.3px;width:19px;height:18px;background:#2a2a2c;"></div>
<div style="left:1549.3px;top:658.5px;width:19px;height:18px;background:#2a2a2c;"></div>
<div style="left:1549.3px;top:396.3px;width:19px;height:1px;background:#3c3c40;"></div>
<div style="left:1549.3px;top:657.5px;width:19px;height:1px;background:#3c3c40;"></div>
<svg style="left:1551.3px;top:382.3px;" width="14" height="10" viewBox="0 0 14 10"><path d="M1.5 8 L7 2.5 L12.5 8" stroke="#4c4c50" stroke-width="1.5" fill="none"/></svg>
<svg style="left:1551.3px;top:662.5px;" width="14" height="10" viewBox="0 0 14 10"><path d="M1.5 2 L7 7.5 L12.5 2" stroke="#4c4c50" stroke-width="1.5" fill="none"/></svg>
<div style="left:1553.8px;top:400.5px;width:9px;height:6.5px;background:#6b6b6f;"></div>
<div style="left:1326px;top:683px;width:247px;height:4px;background:#39393c;"></div>
<div style="left:1328px;top:689.3px;width:243.3px;height:108.5px;background:#4c4d51;border:1px solid #141416;"></div>
<div style="left:1329px;top:690.3px;width:220px;height:106.5px;overflow:hidden;"><div class="t" style="left:75px;top:0.70px;font-size:15px">Model name : NX-ECC201</div><div class="t" style="left:75px;top:20.55px;font-size:15px">Product name : NX-ECC201</div><div class="t" style="left:75px;top:40.40px;font-size:15px"><span style="letter-spacing:-0.5px">Revision : 1.2</span></div><div class="t" style="left:75px;top:60.25px;font-size:15px">Vendor :&nbsp; OMRON Corporation</div><div class="t" style="left:75px;top:80.10px;font-size:15px">Comment : EtherCAT Coupler</div><div class="t" style="left:75px;top:99.95px;font-size:15px">URL : </div><div class="t" style="left:112px;top:99.9px;color:#30d050">Open vendor web site</div><svg style="left:22px;top:21px" width="48" height="34" viewBox="0 0 48 34"><path d="M5 2 V8.5 Q5 10.5 7 10.5 H17 M5 33 V25 Q5 23 7 23 H17" stroke="#fba300" stroke-width="3.4" fill="none"/><rect x="17.5" y="4" width="29" height="29" fill="#2a2a2c" opacity="0.5"/><rect x="16.5" y="3" width="29" height="28.5" fill="#fbfbfb"/><rect x="22" y="5" width="17" height="24.5" fill="#141416"/><rect x="29" y="7" width="7" height="8" fill="#3a3a3c"/><rect x="24.5" y="11" width="3" height="2" fill="#e8d828"/><rect x="24.5" y="15" width="3" height="2" fill="#e8d828"/><rect x="24.5" y="19" width="3" height="2" fill="#e8d828"/><rect x="24.5" y="23" width="3" height="2" fill="#e8d828"/></svg></div>
<div style="left:1549px;top:690.3px;width:21.3px;height:106.5px;background:#3c3c40;"></div>
<div style="left:1550px;top:691.3px;width:18.3px;height:104.5px;background:#3a3a3e;"></div>
<div style="left:1550px;top:691.3px;width:18.3px;height:18px;background:#2a2a2c;"></div>
<div style="left:1550px;top:777.8px;width:18.3px;height:18px;background:#2a2a2c;"></div>
<div style="left:1550px;top:709.3px;width:18.3px;height:1px;background:#3c3c40;"></div>
<div style="left:1550px;top:776.8px;width:18.3px;height:1px;background:#3c3c40;"></div>
<svg style="left:1551.65px;top:695.3px;" width="14" height="10" viewBox="0 0 14 10"><path d="M1.5 8 L7 2.5 L12.5 8" stroke="#4c4c50" stroke-width="1.5" fill="none"/></svg>
<svg style="left:1551.65px;top:781.8px;" width="14" height="10" viewBox="0 0 14 10"><path d="M1.5 2 L7 7.5 L12.5 2" stroke="#4c4c50" stroke-width="1.5" fill="none"/></svg>
<div style="left:1554.5px;top:712.8px;width:8.3px;height:54px;background:#6b6b6f;"></div>
<div style="left:1326px;top:811px;width:248px;height:260.5px;background:#4b4b50;"></div>
<div class="hdr" style="left:1326px;top:810.8px;width:248px;height:26.2px;"></div>
<div class="t" style="left:1331px;top:814.6px;letter-spacing:-0.101px;">Controller Status</div>
<div class="grip" style="left:1449px;top:820.8px;width:74px;height:7px;"></div>
<svg style="left:1537px;top:824px;" width="10.4" height="5.5" viewBox="0 0 10.4 5.5"><path d="M0 0 H10.4 L5.2 5.5 Z" fill="#fff"/></svg>
<svg style="left:1557px;top:818.4px;" width="10" height="14" viewBox="0 0 10 14"><path d="M1 0 H8.3 V8.3 H5 V1 H2.4 V8.3 H1 Z" fill="#fff"/><rect x="0" y="8.1" width="9.2" height="1.4" fill="#fff"/><rect x="3.5" y="9.5" width="1.8" height="3.8" fill="#fff"/></svg>
<div style="left:1326px;top:837.6px;width:247px;height:24.4px;background:linear-gradient(#58595c 0%,#4b4d50 36%,#1e2224 50%,#1f2325 64%,#313537 100%);border-radius:5px 5px 0 0;"></div>
<div style="left:1326px;top:862px;width:247px;height:1px;background:#707074;"></div>
<svg style="left:1528.3px;top:840px;" width="20" height="19.5" viewBox="0 0 20 19.5"><rect x="0.5" y="0.5" width="19" height="18.5" fill="#38383a" stroke="#8c8c8e"/><rect x="2" y="2" width="16" height="15.5" fill="none" stroke="#6a6a6c" stroke-width="1"/><path d="M5 15 L13.5 6.5 M7.5 5.2 H14.8 V12.5" stroke="#a4a4a6" stroke-width="2.6" fill="none"/></svg>
<svg style="left:1555px;top:843px;" width="13" height="13" viewBox="0 0 13 13"><path d="M1.5 1.5 L11.5 11.5 M11.5 1.5 L1.5 11.5" stroke="#6c6c6e" stroke-width="2.2"/></svg>
<div style="left:1573px;top:838px;width:1px;height:234px;background:#6c6c70;"></div>
<div style="left:1331px;top:868px;width:237px;height:39.6px;background:#4e4e53;border:1px solid #0c0c0e;box-shadow:inset 0 0 0 0.5px #1a1a1c;"></div>
<div class="t" style="left:1343.6px;top:869.5px;letter-spacing:-0.574px;">ONLINE</div>
<div class="t" style="left:1334.6px;top:889.5px;letter-spacing:-0.840px;">ERR/ALM</div>
<div class="t" style="left:1466.5px;top:869.5px;letter-spacing:-0.471px;">192.168.250.1</div>
<div class="t" style="left:1466.5px;top:889.5px;letter-spacing:-0.211px;">RUN mode</div>
<div style="left:1412.4px;top:872.5px;width:12.4px;height:12.4px;background:#2fc46c;border-radius:50%;"></div>
<div style="left:1412.4px;top:892.5px;width:12.4px;height:12.4px;background:#2fc46c;border-radius:50%;"></div>
<div style="left:267px;top:824px;width:1049px;height:222px;background:#4b4b50;"></div>
<div class="hdr2" style="left:267px;top:824px;width:1049px;height:26.7px;"></div>
<div class="t" style="left:272px;top:828.5px;">Build</div>
<div class="grip2" style="left:315px;top:834px;width:936px;height:7px;"></div>
<svg style="left:1259.8px;top:837.9px;" width="10.4" height="5.5" viewBox="0 0 10.4 5.5"><path d="M0 0 H10.4 L5.2 5.5 Z" fill="#fff"/></svg>
<svg style="left:1279px;top:831px;" width="10" height="14" viewBox="0 0 10 14"><path d="M1 0 H8.3 V8.3 H5 V1 H2.4 V8.3 H1 Z" fill="#fff"/><rect x="0" y="8.1" width="9.2" height="1.4" fill="#fff"/><rect x="3.5" y="9.5" width="1.8" height="3.8" fill="#fff"/></svg>
<svg style="left:1298px;top:832px;" width="13" height="13" viewBox="0 0 13 13"><path d="M1.5 1.5 L11.5 11.5 M11.5 1.5 L1.5 11.5" stroke="#fff" stroke-width="1.8"/></svg>
<div style="left:271px;top:855px;width:88px;height:20px;background:#71b2ee;border:1px solid #07071a;"></div>
<div style="left:366px;top:855px;width:112px;height:20px;background:#71b2ee;border:1px solid #07071a;"></div>
<div class="t" style="left:297.9px;top:853.3px;font-size:14.5px;color:#2f45a8;letter-spacing:-0.110px;">0&nbsp; Errors</div>
<div class="t" style="left:393.1px;top:853.3px;font-size:14.5px;color:#2f45a8;letter-spacing:0.116px;">0&nbsp; Warnings</div>
<svg style="left:270.8px;top:855px;" width="20" height="20" viewBox="0 0 20 20"><defs><radialGradient id="rg" cx="0.35" cy="0.3" r="0.8"><stop offset="0" stop-color="#ff7070"/><stop offset="0.5" stop-color="#e01818"/><stop offset="1" stop-color="#8a0808"/></radialGradient></defs><circle cx="10" cy="10" r="9.5" fill="url(#rg)"/><path d="M6 6 L14 14 M14 6 L6 14" stroke="#fff" stroke-width="2.6"/></svg>
<svg style="left:366px;top:854.5px;" width="20" height="20" viewBox="0 0 22 21"><path d="M11 1.5 L21 20 H1 Z" fill="#f4e020" stroke="#8a7a08" stroke-width="1"/><path d="M11 7 V14" stroke="#111" stroke-width="2.6"/><circle cx="11" cy="17" r="1.5" fill="#111"/></svg>
<div style="left:270px;top:879px;width:1043px;height:19px;background:#3c3c41;"></div>
<div style="left:300px;top:882.3px;width:2px;height:10.8px;background:#fff;"></div>
<div style="left:338px;top:882.3px;width:1px;height:10.8px;background:#fff;"></div>
<div style="left:588px;top:882.3px;width:1px;height:10.8px;background:#fff;"></div>
<div style="left:713px;top:882.3px;width:1px;height:10.8px;background:#fff;"></div>
<div style="left:900px;top:882.3px;width:2px;height:10.8px;background:#fff;"></div>
<div style="left:1313px;top:882.3px;width:1px;height:10.8px;background:#fff;"></div>
<div class="t" style="left:426px;top:878.5px;">Description</div>
<div class="t" style="left:622px;top:878.5px;">Program</div>
<div class="t" style="left:779px;top:878.5px;">Location</div>
<div style="left:267px;top:1046px;width:58px;height:26px;background:#4b4b50;"></div>
<div class="t" style="left:272px;top:1048.5px;color:#a3a3a6;">Output</div>
<div style="left:327px;top:1046px;width:44px;height:26px;background:#6fb3ef;"></div>
<div class="t" style="left:332px;top:1048.5px;color:#0a0a14;">Build</div>
<div style="left:1px;top:1081px;width:1581px;height:1px;background:#9a9a9c;"></div>
<div style="left:1px;top:1082px;width:1581px;height:30px;background:#1f1f22;"></div>
<div style="left:264px;top:68px;width:395.5px;height:638px;background:linear-gradient(#f8f8f8 0%,#f5f5f6 35%,#eceef2 65%,#e2e5ee 100%);border:1px solid #c2c2c5;border-top-color:#ececee;border-right-color:#d4d4d8;box-shadow:1px 1px 2px rgba(0,0,0,0.35);"></div>
<div style="left:267px;top:127.5px;width:390px;height:1.3px;background:#adadb0;"></div>
<div style="left:267px;top:128.5px;width:390px;height:1px;background:#dcdcde;"></div>
<div style="left:267px;top:189px;width:390px;height:1.3px;background:#adadb0;"></div>
<div style="left:267px;top:190px;width:390px;height:1px;background:#dcdcde;"></div>
<div style="left:267px;top:250.5px;width:390px;height:1.3px;background:#adadb0;"></div>
<div style="left:267px;top:251.5px;width:390px;height:1px;background:#dcdcde;"></div>
<div style="left:267px;top:283.5px;width:390px;height:1.3px;background:#adadb0;"></div>
<div style="left:267px;top:284.5px;width:390px;height:1px;background:#dcdcde;"></div>
<div style="left:267px;top:345px;width:390px;height:1.3px;background:#adadb0;"></div>
<div style="left:267px;top:346px;width:390px;height:1px;background:#dcdcde;"></div>
<div style="left:267px;top:406.5px;width:390px;height:1.3px;background:#adadb0;"></div>
<div style="left:267px;top:407.5px;width:390px;height:1px;background:#dcdcde;"></div>
<div style="left:267px;top:494.5px;width:390px;height:1.3px;background:#adadb0;"></div>
<div style="left:267px;top:495.5px;width:390px;height:1px;background:#dcdcde;"></div>
<div style="left:267px;top:610.5px;width:390px;height:1.3px;background:#adadb0;"></div>
<div style="left:267px;top:611.5px;width:390px;height:1px;background:#dcdcde;"></div>
<div style="left:267px;top:644.5px;width:390px;height:1.3px;background:#adadb0;"></div>
<div style="left:267px;top:645.5px;width:390px;height:1px;background:#dcdcde;"></div>
<div style="left:267px;top:222px;width:388px;height:25px;background:#72b6f0;"></div>
<div class="t" style="left:289.4px;top:75.5px;color:#a9a9ab;letter-spacing:-0.164px;">Communications Setup...</div>
<div class="t" style="left:289.4px;top:102.5px;color:#a9a9ab;letter-spacing:-0.335px;">Change Device</div>
<div class="t" style="left:289.4px;top:136.5px;color:#a9a9ab;letter-spacing:-0.027px;">Online</div>
<div class="t" style="left:550px;top:136.5px;color:#a9a9ab;letter-spacing:0.126px;">Ctrl+W</div>
<div class="t" style="left:289.4px;top:163.5px;color:#0c0c12;letter-spacing:0.131px;">Offline</div>
<div class="t" style="left:550px;top:163.5px;color:#0c0c12;letter-spacing:0.182px;">Ctrl+Shift+W</div>
<div class="t" style="left:289.4px;top:197.5px;color:#0c0c12;letter-spacing:-0.439px;">Synchronize...</div>
<div class="t" style="left:550px;top:197.5px;color:#0c0c12;letter-spacing:0.253px;">Ctrl+M</div>
<div class="t" style="left:289.4px;top:224.5px;color:#0c0c12;letter-spacing:-0.506px;">Transfer...</div>
<svg style="left:642px;top:229.5px;" width="6" height="9" viewBox="0 0 6 9"><path d="M0.5 0 V9 L5.5 4.5 Z" fill="#111"/></svg>
<div class="t" style="left:289.4px;top:258.5px;color:#0c0c12;letter-spacing:0.345px;">Mode</div>
<svg style="left:642px;top:263.5px;" width="6" height="9" viewBox="0 0 6 9"><path d="M0.5 0 V9 L5.5 4.5 Z" fill="#111"/></svg>
<div class="t" style="left:289.4px;top:292.5px;color:#a9a9ab;letter-spacing:0.412px;">Monitor</div>
<div class="t" style="left:289.4px;top:319.5px;color:#0c0c12;letter-spacing:0.189px;">Stop Monitoring</div>
<div class="t" style="left:289.4px;top:353.5px;color:#0c0c12;letter-spacing:-0.407px;">Set/Reset</div>
<svg style="left:642px;top:358.5px;" width="6" height="9" viewBox="0 0 6 9"><path d="M0.5 0 V9 L5.5 4.5 Z" fill="#111"/></svg>
<div class="t" style="left:289.4px;top:380.5px;color:#0c0c12;letter-spacing:-0.311px;">Forced Refreshing</div>
<svg style="left:642px;top:385.5px;" width="6" height="9" viewBox="0 0 6 9"><path d="M0.5 0 V9 L5.5 4.5 Z" fill="#111"/></svg>
<div class="t" style="left:289.4px;top:414.5px;color:#0c0c12;letter-spacing:-0.393px;">MC Test Run</div>
<svg style="left:642px;top:419.5px;" width="6" height="9" viewBox="0 0 6 9"><path d="M0.5 0 V9 L5.5 4.5 Z" fill="#111"/></svg>
<div class="t" style="left:289.4px;top:442.5px;color:#0c0c12;letter-spacing:-0.083px;">MC Monitor Table...</div>
<div class="t" style="left:289.4px;top:469.5px;color:#0c0c12;letter-spacing:-0.119px;">CNC Coordinate System Monitor Table</div>
<svg style="left:642px;top:474.5px;" width="6" height="9" viewBox="0 0 6 9"><path d="M0.5 0 V9 L5.5 4.5 Z" fill="#111"/></svg>
<div class="t" style="left:289.4px;top:503.5px;color:#0c0c12;letter-spacing:-0.333px;">SD Memory Card...</div>
<div class="t" style="left:289.4px;top:530.5px;color:#0c0c12;letter-spacing:-0.195px;">Controller Clock...</div>
<div class="t" style="left:289.4px;top:558.5px;color:#0c0c12;letter-spacing:-0.522px;">Release Access Right...</div>
<div class="t" style="left:289.4px;top:585.5px;color:#0c0c12;letter-spacing:-0.271px;">Update CPU Unit Name...</div>
<div class="t" style="left:289.4px;top:619.5px;color:#0c0c12;letter-spacing:-0.261px;">Security</div>
<svg style="left:642px;top:624.5px;" width="6" height="9" viewBox="0 0 6 9"><path d="M0.5 0 V9 L5.5 4.5 Z" fill="#111"/></svg>
<div class="t" style="left:289.4px;top:652.5px;color:#a9a9ab;letter-spacing:-0.104px;">Clear All Memory...</div>
<div class="t" style="left:289.4px;top:680.5px;color:#a9a9ab;letter-spacing:-0.261px;">Reset Controller...</div>
<div style="left:655.5px;top:218.3px;width:250px;height:61px;background:linear-gradient(#f6f6f7,#e8eaf2);border:1px solid #d0d0d4;box-shadow:1px 1px 2px rgba(0,0,0,0.35);"></div>
<div style="left:660px;top:223px;width:241px;height:24.5px;background:#72b6f0;"></div>
<div class="t" style="left:681.7px;top:227px;color:#0c0c12;letter-spacing:-0.144px;">To Controller...</div>
<div class="t" style="left:801.5px;top:227px;color:#0c0c12;letter-spacing:-0.042px;">Ctrl+T</div>
<div class="t" style="left:681.7px;top:254px;color:#0c0c12;letter-spacing:-0.159px;">From Controller...</div>
<div class="t" style="left:801.5px;top:254px;color:#0c0c12;letter-spacing:0.106px;">Ctrl+Shift+T</div>
<svg style="left:780px;top:240px;" width="13" height="21" viewBox="0 0 13 21"><path d="M1 1 V16.5 L4.7 13 L7.3 19.3 L10 18.2 L7.4 12 H12 Z" fill="#fff" stroke="#000" stroke-width="1"/></svg>
</div>
</body></html>
